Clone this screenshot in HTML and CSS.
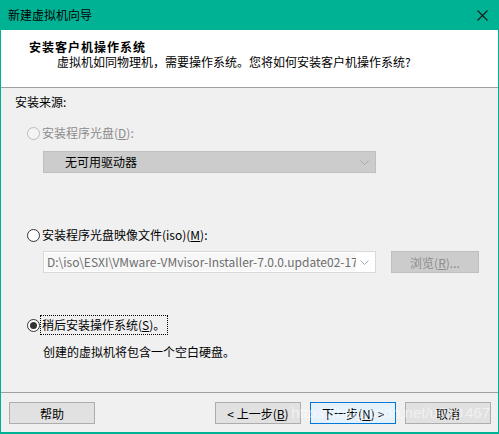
FILE: index.html
```html
<!DOCTYPE html>
<html lang="zh-CN">
<head>
<meta charset="utf-8">
<title>新建虚拟机向导</title>
<link rel="stylesheet" href="styles.css">
</head>
<body>
<div class="window">
  <div class="titlebar">
    <span class="title">新建虚拟机向导</span>
    <svg class="close" width="11" height="11" viewBox="0 0 11 11"><path d="M0.5 0.5 L10.5 10.5 M10.5 0.5 L0.5 10.5" stroke="#1a1a1a" stroke-width="1.1" fill="none"/></svg>
  </div>
  <div class="header">
    <div class="h-title">安装客户机操作系统</div>
    <div class="h-sub">虚拟机如同物理机，需要操作系统。您将如何安装客户机操作系统?</div>
  </div>
  <div class="content">
    <div class="section-label">安装来源:</div>

    <div class="radio-row row1 disabled">
      <span class="radio"></span>
      <span class="label">安装程序光盘(<u>D</u>):</span>
    </div>
    <div class="select disabled-select">
      <span class="select-text">无可用驱动器</span>
      <svg class="chev" width="9" height="5" viewBox="0 0 9 5"><path d="M0.5 0.5 L4.5 4.5 L8.5 0.5" stroke="#a8a8a8" fill="none"/></svg>
    </div>

    <div class="radio-row row2">
      <span class="radio"></span>
      <span class="label">安装程序光盘映像文件(iso)(<u>M</u>):</span>
    </div>
    <div class="iso-row">
      <div class="combo">
        <span class="combo-text">D:\iso\ESXI\VMware-VMvisor-Installer-7.0.0.update02-17</span>
        <svg class="chev" width="9" height="5" viewBox="0 0 9 5"><path d="M0.5 0.5 L4.5 4.5 L8.5 0.5" stroke="#a8a8a8" fill="none"/></svg>
      </div>
      <div class="browse">浏览(<u>R</u>)...</div>
    </div>

    <div class="radio-row row3">
      <span class="radio checked"></span>
      <span class="label focus">稍后安装操作系统(<u>S</u>)。</span>
    </div>
    <div class="desc">创建的虚拟机将包含一个空白硬盘。</div>
  </div>
  <div class="footer">
    <div class="btn">帮助</div>
    <div class="right-btns">
      <div class="btn">&lt; 上一步(<u>B</u>)</div>
      <div class="btn primary">下一步(<u>N</u>) &gt;</div>
      <div class="btn">取消</div>
    </div>
    <div class="watermark">https://blog.csdn.net/u010<span class="wm-gap"></span>467</div>
  </div>
</div>
</body>
</html>
```

FILE: styles.css
```css
html, body {
  margin: 0;
  padding: 0;
  background: #f0f0f0;
}
body {
  font-family: "Noto Sans CJK SC", "Noto Sans", sans-serif;
  font-size: 12px;
  color: #000;
}
.window {
  width: 499px;
  height: 434px;
  box-sizing: border-box;
  border: 1px solid #00b294;
  border-top: none;
  border-bottom-width: 2px;
  background: #f0f0f0;
  display: flex;
  flex-direction: column;
  overflow: hidden;
}
.titlebar {
  height: 30px;
  flex: none;
  background: #00b294;
  display: flex;
  align-items: center;
  justify-content: space-between;
  padding: 0 10px 0 8px;
  margin: 0 -1px;
}
.title {
  font-size: 12px;
  line-height: 16px;
  color: #000;
}
.close {
  display: block;
  margin-right: 1px;
}
.header {
  flex: none;
  height: 58px;
  box-sizing: border-box;
  background: #fff;
  border-bottom: 1px solid #a0a0a0;
  padding: 9px 0 0 28px;
}
.h-title {
  font-weight: bold;
  line-height: 15px;
  letter-spacing: 1px;
}
.h-sub {
  line-height: 16px;
  padding-left: 28px;
}
.content {
  padding-left: 14px;
  display: flex;
  flex-direction: column;
  align-items: flex-start;
}
.section-label {
  margin-top: 6px;
  line-height: 16px;
}
.radio-row {
  display: flex;
  align-items: center;
  height: 16px;
  padding-left: 12px;
}
.row1 { margin-top: 15px; }
.row2 { margin-top: 54px; }
.row3 { margin-top: 44px; }
.radio {
  width: 13px;
  height: 13px;
  box-sizing: border-box;
  border-radius: 50%;
  border: 1px solid #333;
  background: #fff;
  margin-right: 2px;
  position: relative;
  flex: none;
}
.disabled .radio {
  border-color: #bcbcbc;
  background: #f4f4f4;
}
.radio.checked::after {
  content: "";
  position: absolute;
  left: 2px;
  top: 2px;
  width: 7px;
  height: 7px;
  border-radius: 50%;
  background: #333;
}
.label {
  line-height: 16px;
  white-space: nowrap;
}
.disabled .label {
  color: #8c8c8c;
}
.label.focus {
  outline: 1px dotted #000;
  outline-offset: 1px;
  padding-right: 1px;
}
.select {
  margin: 10px 0 0 28px;
  width: 333px;
  height: 22px;
  box-sizing: border-box;
  display: flex;
  align-items: center;
  justify-content: space-between;
  padding: 0 6px 0 21px;
}
.disabled-select {
  background: #cccccc;
  border: 1px solid #bfbfbf;
}
.select-text {
  line-height: 16px;
}
.iso-row {
  display: flex;
  align-items: center;
  margin: 8px 0 0 28px;
}
.combo {
  width: 333px;
  height: 22px;
  box-sizing: border-box;
  border: 1px solid #d9d9d9;
  background: #fff;
  display: flex;
  align-items: center;
  padding: 1px 6px 1px 1px;
  overflow: hidden;
}
.combo-text {
  background: #f7f7f7;
  color: #6d6d6d;
  line-height: 18px;
  padding-left: 2px;
  width: 309px;
  flex: none;
  white-space: nowrap;
  overflow: hidden;
}
.combo .chev {
  margin-left: auto;
}
.browse {
  margin-left: 15px;
  width: 88px;
  height: 22px;
  box-sizing: border-box;
  background: #cccccc;
  border: 1px solid #bfbfbf;
  color: #8c8c8c;
  display: flex;
  align-items: center;
  justify-content: center;
}
.desc {
  margin: 11px 0 0 28px;
  line-height: 16px;
}
.footer {
  margin-top: auto;
  height: 40px;
  box-sizing: border-box;
  border-top: 1px solid #a0a0a0;
  display: flex;
  align-items: flex-start;
  justify-content: space-between;
  padding: 9px 7px 0 8px;
  position: relative;
}
.right-btns {
  display: flex;
  gap: 9px;
}
.btn {
  width: 86px;
  height: 22px;
  box-sizing: border-box;
  background: #e1e1e1;
  border: 1px solid #adadad;
  display: flex;
  align-items: center;
  justify-content: center;
  white-space: nowrap;
}
.btn.primary {
  background: #e5f1fb;
  border-color: #0078d7;
}
.watermark {
  position: absolute;
  right: 8px;
  top: 11px;
  font-family: "Liberation Sans", sans-serif;
  font-size: 15px;
  line-height: 18px;
  color: rgba(255, 255, 255, 0.55);
  white-space: nowrap;
  pointer-events: none;
}
.wm-gap {
  display: inline-block;
  width: 2px;
}
```
